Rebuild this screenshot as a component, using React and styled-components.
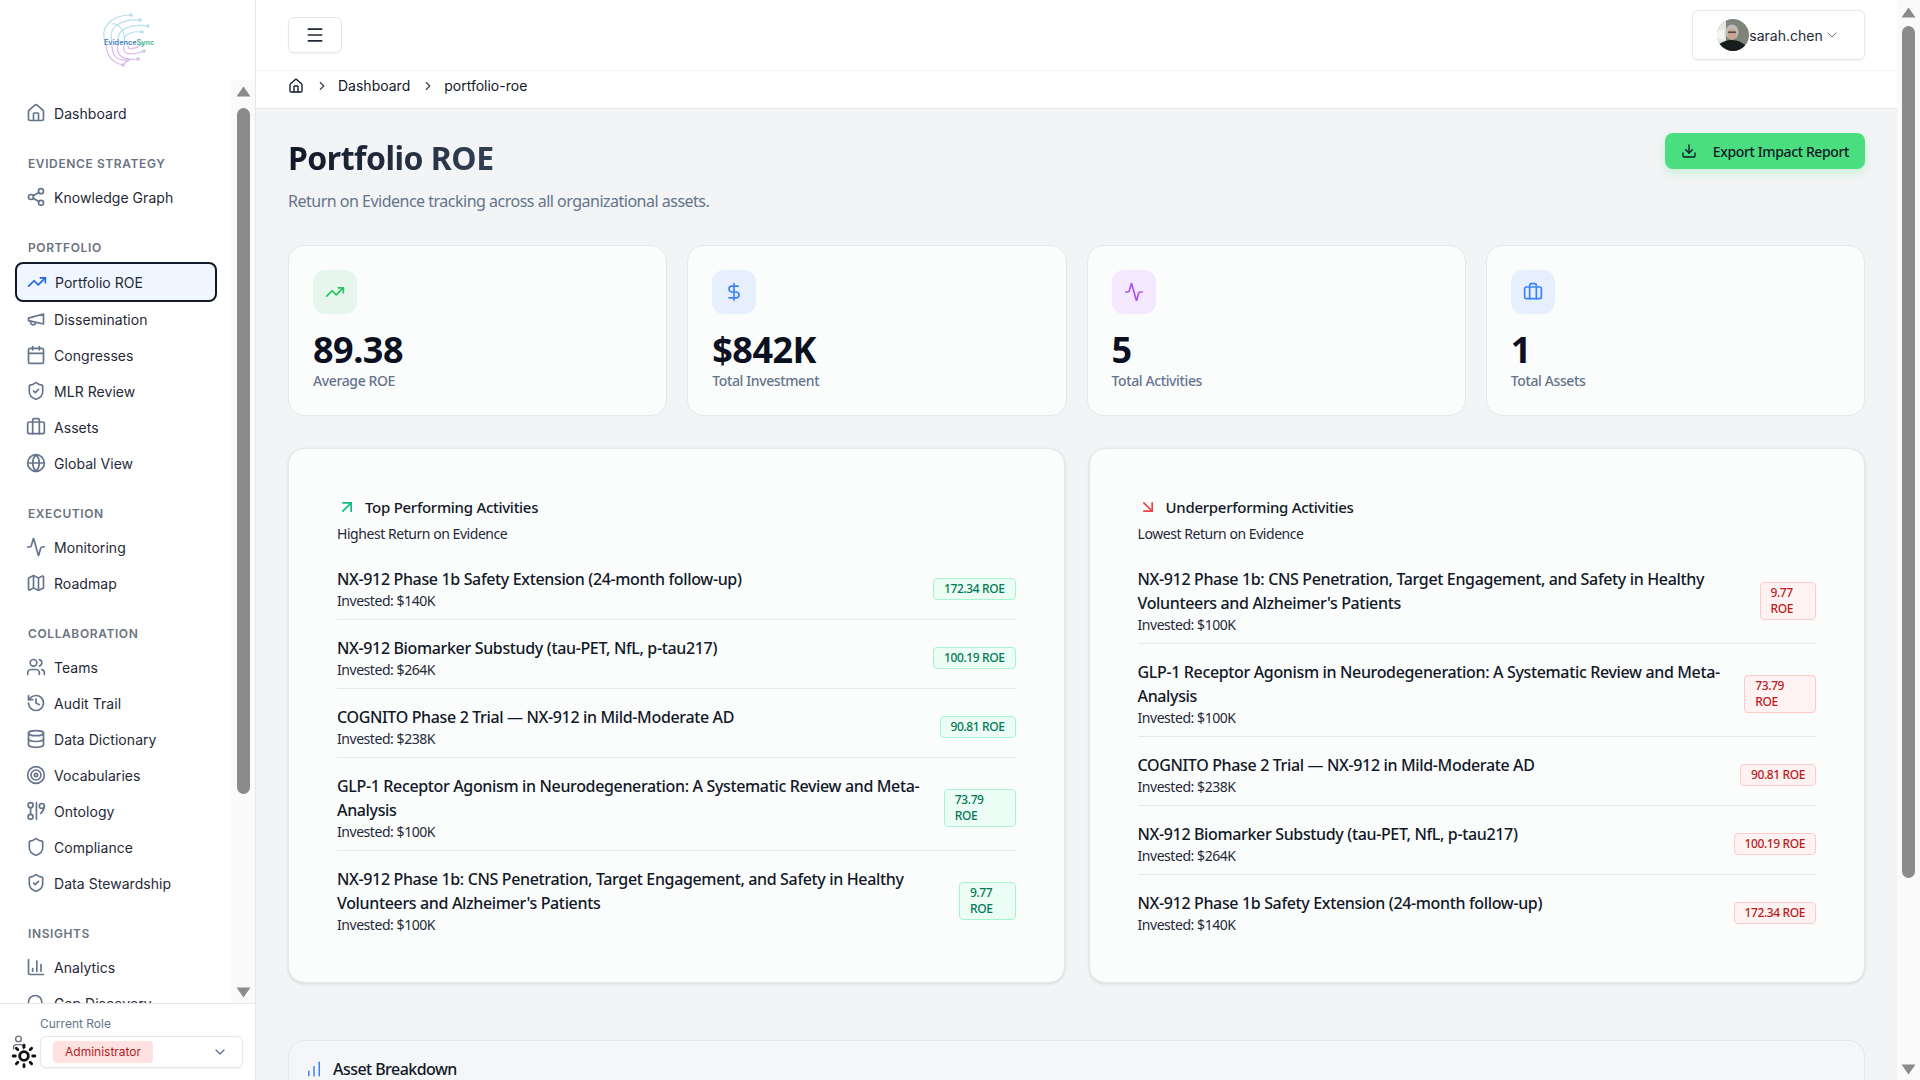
import styled, { createGlobalStyle } from 'styled-components';
import {
  Activity, ArrowDownRight, ArrowUpRight, Briefcase, Calendar, ChartColumn, ChartNoAxesColumnIncreasing, ChevronDown,
  ChevronRight, Database, DollarSign, Download, Globe, History, House, Map as MapIcon, Menu, Search, Shield,
  ShieldCheck, Share2, Sun, Target, TrendingUp, User, Users,
} from 'lucide-react';

const GlobalStyle = createGlobalStyle`
  html, body, #root { height: 100%; margin: 0; }
  body {
    overflow: hidden;
    font-family: Inter, "Liberation Sans", sans-serif;
    background: #f3f4f6;
    color: #1f2937;
  }
  * { box-sizing: border-box; }
`;

const Shell = styled.div`
  display: flex;
  height: 1080px;
  width: 1920px;
`;

const Sidebar = styled.aside`
  position: relative;
  flex: 0 0 256px;
  display: flex;
  flex-direction: column;
  background: #fff;
  border-right: 1px solid #e5e7eb;
`;

const LogoWrap = styled.div`
  flex: 0 0 80px;
  display: flex;
  align-items: center;
  justify-content: center;
  padding-top: 1px;
`;

const Nav = styled.nav`
  flex: 1;
  overflow: hidden;
  padding: 15px 38px 0 15px;
  min-height: 0;
`;

const SectionLabel = styled.div`
  height: 20px;
  line-height: 20px;
  margin: 23px 0 5px;
  padding-left: 13px;
  font-size: 12px;
  font-weight: 600;
  letter-spacing: 0.6px;
  color: #6b7280;
`;

const NavItem = styled.a`
  display: flex;
  align-items: center;
  gap: 8px;
  height: 36px;
  padding-left: 11px;
  font-size: 14px;
  letter-spacing: 0.05px;
  color: #1f2937;
  white-space: nowrap;
  svg { color: #64748b; flex: none; }
`;

const ActiveItem = styled(NavItem)`
  height: 40px;
  margin: -1px 0 -1px;
  background: #eff6ff;
  border: 2px solid #111827;
  border-radius: 8px;
  padding-left: 10px;
  svg { color: #2563eb; }
`;

const Rail = styled.div`
  position: absolute;
  background: #fafafa;
  width: 24px;
  display: flex;
  flex-direction: column;
  align-items: center;
`;

const SideRail = styled(Rail)`
  left: 231px;
  top: 80px;
  height: 923px;
`;

const PageRail = styled(Rail)`
  right: 0;
  top: 0;
  height: 1080px;
  width: 23px;
`;

const Arrow = styled.svg`
  flex: none;
  fill: #8b8b8b;
  margin: ${(p) => p.$margin};
`;

const Thumb = styled.div`
  width: 13px;
  height: ${(p) => p.$height}px;
  margin-top: ${(p) => p.$top}px;
  background: #8b8b8b;
  border-radius: 7px;
`;

const RoleBar = styled.div`
  flex: 0 0 77px;
  display: flex;
  align-items: flex-end;
  gap: 5px;
  padding: 0 12px 12px 12px;
  background: #fff;
  border-top: 1px solid #e5e7eb;
`;

const RoleIcon = styled.div`
  position: relative;
  width: 23px;
  height: 35px;
  flex: none;
  margin-bottom: -1px;
`;

const RoleUser = styled(User)`
  position: absolute;
  left: -2px;
  top: 0;
  color: #6b7280;
`;

const RoleSun = styled(Sun)`
  position: absolute;
  left: -1px;
  bottom: 0;
  color: #111;
`;

const RoleField = styled.div`
  flex: 1;
`;

const RoleLabel = styled.div`
  font-size: 12px;
  line-height: 16px;
  margin-bottom: 4px;
  color: #64748b;
`;

const RoleSelect = styled.div`
  display: flex;
  align-items: center;
  justify-content: space-between;
  height: 32px;
  padding: 0 14px 0 12px;
  border: 1px solid #e2e8f0;
  border-radius: 6px;
  box-shadow: 0 1px 2px rgba(0, 0, 0, 0.05);
  svg { color: #64748b; }
`;

const RoleTag = styled.span`
  padding: 0 12px;
  height: 22px;
  line-height: 22px;
  font-size: 12px;
  color: #b91c1c;
  background: #fee2e2;
  border-radius: 4px;
`;

const Main = styled.main`
  position: relative;
  flex: 1;
  min-width: 0;
  display: flex;
  flex-direction: column;
  padding-right: 23px;
`;

const TopBar = styled.header`
  flex: 0 0 71px;
  display: flex;
  align-items: center;
  justify-content: space-between;
  padding: 0 32px;
  background: #fff;
  border-bottom: 1px solid #f3f4f6;
`;

const MenuButton = styled.button`
  display: flex;
  align-items: center;
  justify-content: center;
  width: 54px;
  height: 36px;
  background: #fff;
  border: 1px solid #e5e7eb;
  border-radius: 6px;
  box-shadow: 0 1px 2px rgba(0, 0, 0, 0.05);
  color: #1f2937;
`;

const UserButton = styled.button`
  display: flex;
  align-items: center;
  justify-content: center;
  width: 173px;
  height: 50px;
  background: #fff;
  border: 1px solid #e5e7eb;
  border-radius: 6px;
  box-shadow: 0 1px 2px rgba(0, 0, 0, 0.05);
  font-family: Inter, sans-serif;
  font-size: 14px;
  color: #1f2937;
  svg.chevron { color: #6b7280; margin-left: 1px; }
`;

const Crumbs = styled.div`
  flex: 0 0 38px;
  display: flex;
  align-items: center;
  padding: 0 32px 8px;
  background: #fff;
  border-bottom: 1px solid #e5e7eb;
  font-size: 14px;
  color: #111827;
`;

const CrumbSep = styled(ChevronRight)`
  margin: 0 9px 0 11px;
  color: #374151;
`;

const Content = styled.div`
  flex: 1;
  overflow: hidden;
  padding: 24px 32px 0;
  font-family: "Noto Sans", "Open Sans", sans-serif;
`;

const PageHead = styled.div`
  display: flex;
  justify-content: space-between;
  align-items: flex-start;
`;

const Title = styled.h1`
  display: inline-block;
  margin: 0;
  font-size: 32px;
  line-height: 50px;
  font-weight: 700;
  letter-spacing: -0.5px;
  background: linear-gradient(90deg, #111827, #334155);
  -webkit-background-clip: text;
  background-clip: text;
  color: transparent;
`;

const Subtitle = styled.p`
  margin: 6px 0 0;
  font-size: 16px;
  line-height: 24px;
  letter-spacing: -0.5px;
  color: #64748b;
`;

const ExportButton = styled.button`
  display: flex;
  align-items: center;
  gap: 16px;
  height: 36px;
  padding: 0 16px;
  border: 0;
  border-radius: 8px;
  background: #4ade80;
  box-shadow: 0 4px 8px rgba(74, 222, 128, 0.25);
  font-family: "Noto Sans", sans-serif;
  font-size: 14px;
  font-weight: 500;
  letter-spacing: -0.38px;
  color: #111827;
`;

const StatGrid = styled.div`
  display: grid;
  grid-template-columns: repeat(4, 1fr);
  gap: 20px;
  margin-top: 32px;
`;

const StatCard = styled.div`
  height: 171px;
  padding: 24px;
  background: #fbfcfc;
  border: 1px solid #e5e7eb;
  border-radius: 16px;
`;

const StatIcon = styled.div`
  display: flex;
  align-items: center;
  justify-content: center;
  width: 44px;
  height: 44px;
  border-radius: 12px;
  background: ${(p) => p.$bg};
  color: ${(p) => p.$fg};
`;

const StatValue = styled.div`
  margin-top: 14px;
  font-size: 36px;
  line-height: 43px;
  font-weight: 700;
  letter-spacing: -0.5px;
  color: #0b1120;
`;

const StatLabel = styled.div`
  font-size: 14px;
  line-height: 20px;
  font-weight: 500;
  letter-spacing: -0.38px;
  color: #64748b;
`;

const PanelGrid = styled.div`
  display: grid;
  grid-template-columns: repeat(2, 1fr);
  gap: 24px;
  margin-top: 32px;
`;

const Panel = styled.section`
  height: 535px;
  padding: 46px 48px 0;
  background: #fbfcfc;
  border: 1px solid #e5e7eb;
  border-radius: 16px;
  box-shadow: 0 1px 3px rgba(0, 0, 0, 0.12);
`;

const PanelTitle = styled.h3`
  display: flex;
  align-items: center;
  gap: 8px;
  margin: 0;
  height: 24px;
  font-size: 15px;
  font-weight: 500;
  letter-spacing: -0.28px;
  color: #111827;
`;

const PanelSub = styled.p`
  margin: 5px 0 0;
  font-size: 14px;
  line-height: 20px;
  letter-spacing: -0.45px;
  color: #1f2937;
`;

const List = styled.ul`
  list-style: none;
  margin: 23px 0 0;
  padding: 0;
`;

const Row = styled.li`
  display: flex;
  align-items: center;
  justify-content: space-between;
  gap: 16px;
  padding-bottom: 8px;
  margin-bottom: 16px;
  border-bottom: 1px solid #e5e7eb;
  &:last-child { border-bottom: 0; margin-bottom: 0; }
`;

const RowName = styled.div`
  font-size: 16px;
  line-height: 24px;
  font-weight: 500;
  letter-spacing: -0.35px;
  color: #111827;
`;

const RowMeta = styled.div`
  font-size: 14px;
  line-height: 20px;
  letter-spacing: -0.45px;
  color: #1f2937;
`;

const RoeBadge = styled.span`
  padding: 2px 10px;
  font-size: 12px;
  line-height: 16px;
  font-weight: 500;
  letter-spacing: -0.4px;
  border-radius: 4px;
  border: 1px solid ${(p) => (p.$bad ? '#fecaca' : '#a7f3d0')};
  background: ${(p) => (p.$bad ? '#fef2f2' : '#ecfdf5')};
  color: ${(p) => (p.$bad ? '#b91c1c' : '#047857')};
`;

const BreakdownCard = styled.section`
  height: 80px;
  margin-top: 57px;
  padding: 16px;
  border: 1px solid #e5e7eb;
  border-radius: 16px 16px 0 0;
  background: #f5f6f7;
`;

const BreakdownTitle = styled.h3`
  display: flex;
  align-items: center;
  gap: 10px;
  margin: 0;
  font-size: 16px;
  line-height: 24px;
  font-weight: 500;
  letter-spacing: -0.55px;
  color: #111827;
  svg { color: #3b82f6; }
`;

const Megaphone = (props) => (
  <svg width="20" height="20" viewBox="0 0 24 24" fill="none" stroke="currentColor" strokeWidth="2" strokeLinecap="round" strokeLinejoin="round" {...props}>
    <path d="m3 11 18-5v12L3 14v-3z" />
    <path d="M11.6 16.8a3 3 0 1 1-5.8-1.6" />
  </svg>
);

const Ontology = (props) => (
  <svg width="20" height="20" viewBox="0 0 24 24" fill="none" stroke="currentColor" strokeWidth="2" strokeLinecap="round" strokeLinejoin="round" {...props}>
    <circle cx="5.5" cy="5" r="3" />
    <circle cx="5.5" cy="19" r="3" />
    <path d="M5.5 8v8" />
    <path d="M12.5 2v20" />
    <circle cx="19" cy="6" r="3" />
    <path d="M21.5 8c0 3-2 5-4 7" />
  </svg>
);

const Logo = () => (
  <svg width="60" height="60" viewBox="0 0 60 60" fill="none" strokeLinecap="round">
    <g stroke="#b9dfef" strokeWidth="1.2">
      <path d="M8 32C1 18 12 4 33 4" />
      <path d="M14 30C10 18 20 8 42 9" />
      <path d="M20 28C20 20 30 12 50 15" />
      <path d="M26 28C28 22 36 20 44 21" />
      <path d="M14 13C22 12 28 22 26 31" />
    </g>
    <g fill="#b9dfef">
      <circle cx="33" cy="4" r="1.8" />
      <circle cx="42" cy="9" r="1.8" />
      <circle cx="50" cy="15" r="1.8" />
      <circle cx="44" cy="21" r="1.8" />
    </g>
    <g stroke="#dcb9ec" strokeWidth="1.2">
      <path d="M8 34C9 46 15 52 25 54" />
      <path d="M14 34C14 44 18 50 30 49" />
      <path d="M20 34C18 42 22 50 40 48" />
      <path d="M26 35C24 42 30 46 46 40" />
      <path d="M30 35C30 38 34 40 44 33" />
      <path d="M25 54L30 49" />
    </g>
    <g fill="#dcb9ec">
      <circle cx="25" cy="54" r="1.8" />
      <circle cx="30" cy="49" r="1.8" />
      <circle cx="40" cy="48" r="1.8" />
    </g>
    <g fill="#b5d4ee">
      <circle cx="46" cy="40" r="1.8" />
      <circle cx="44" cy="33" r="1.8" />
    </g>
    <text x="6" y="33.5" fontFamily="Inter, sans-serif" fontSize="7.2" fontWeight="700" fill="#4f86c6">Evidence<tspan fill="#52c09a">Sync</tspan></text>
  </svg>
);

const Avatar = () => (
  <svg width="32" height="32" viewBox="0 0 32 32">
    <defs>
      <clipPath id="avatar-clip"><circle cx="16" cy="16" r="16" /></clipPath>
    </defs>
    <g clipPath="url(#avatar-clip)">
      <rect width="32" height="32" fill="#7f8478" />
      <rect width="9" height="32" fill="#e3e6e1" />
      <rect x="0" y="11" width="7" height="9" fill="#f5f6f2" />
      <ellipse cx="15" cy="13" rx="6.5" ry="7.5" fill="#bdbcb8" />
      <ellipse cx="15" cy="15" rx="4.5" ry="5.5" fill="#c9a494" />
      <rect x="11" y="12.5" width="8" height="1.4" fill="#4a3a34" />
      <path d="M0 32V27C5 22 11 21 15 21C21 21 27 24 32 30V32Z" fill="#171c1c" />
    </g>
  </svg>
);

const sections = [
  { label: 'EVIDENCE STRATEGY', items: [{ name: 'Knowledge Graph', icon: Share2 }] },
  {
    label: 'PORTFOLIO',
    items: [
      { name: 'Portfolio ROE', icon: TrendingUp, active: true },
      { name: 'Dissemination', icon: Megaphone },
      { name: 'Congresses', icon: Calendar },
      { name: 'MLR Review', icon: ShieldCheck },
      { name: 'Assets', icon: Briefcase },
      { name: 'Global View', icon: Globe },
    ],
  },
  {
    label: 'EXECUTION',
    items: [
      { name: 'Monitoring', icon: Activity },
      { name: 'Roadmap', icon: MapIcon },
    ],
  },
  {
    label: 'COLLABORATION',
    items: [
      { name: 'Teams', icon: Users },
      { name: 'Audit Trail', icon: History },
      { name: 'Data Dictionary', icon: Database },
      { name: 'Vocabularies', icon: Target },
      { name: 'Ontology', icon: Ontology },
      { name: 'Compliance', icon: Shield },
      { name: 'Data Stewardship', icon: ShieldCheck },
    ],
  },
  {
    label: 'INSIGHTS',
    items: [
      { name: 'Analytics', icon: ChartColumn },
      { name: 'Gap Discovery', icon: Search },
    ],
  },
];

const stats = [
  { value: '89.38', label: 'Average ROE', icon: TrendingUp, bg: '#e6f6ec', fg: '#22c55e' },
  { value: '$842K', label: 'Total Investment', icon: DollarSign, bg: '#e8effc', fg: '#3b82f6' },
  { value: '5', label: 'Total Activities', icon: Activity, bg: '#f3e8fd', fg: '#a855f7' },
  { value: '1', label: 'Total Assets', icon: Briefcase, bg: '#e8effc', fg: '#3b82f6' },
];

const topActivities = [
  { name: 'NX-912 Phase 1b Safety Extension (24-month follow-up)', invested: '$140K', roe: '172.34' },
  { name: 'NX-912 Biomarker Substudy (tau-PET, NfL, p-tau217)', invested: '$264K', roe: '100.19' },
  { name: 'COGNITO Phase 2 Trial — NX-912 in Mild-Moderate AD', invested: '$238K', roe: '90.81' },
  { name: 'GLP-1 Receptor Agonism in Neurodegeneration: A Systematic Review and Meta-Analysis', invested: '$100K', roe: '73.79' },
  { name: "NX-912 Phase 1b: CNS Penetration, Target Engagement, and Safety in Healthy Volunteers and Alzheimer's Patients", invested: '$100K', roe: '9.77' },
];

function ActivityList({ rows, bad }) {
  return (
    <List>
      {rows.map((row) => (
        <Row key={row.name}>
          <div>
            <RowName>{row.name}</RowName>
            <RowMeta>Invested: {row.invested}</RowMeta>
          </div>
          <RoeBadge $bad={bad}>{row.roe} ROE</RoeBadge>
        </Row>
      ))}
    </List>
  );
}

function UpArrow({ margin }) {
  return (
    <Arrow $margin={margin} width="15" height="11" viewBox="0 0 15 11">
      <path d="M7.5 0.5 14.5 10.5H0.5Z" />
    </Arrow>
  );
}

function DownArrow({ margin }) {
  return (
    <Arrow $margin={margin} width="15" height="11" viewBox="0 0 15 11">
      <path d="M7.5 10.5 14.5 0.5H0.5Z" />
    </Arrow>
  );
}

export default function App() {
  return (
    <Shell>
      <GlobalStyle />
      <Sidebar>
        <LogoWrap>
          <Logo />
        </LogoWrap>
        <Nav>
          <NavItem><House size={20} />Dashboard</NavItem>
          {sections.map((section) => (
            <div key={section.label}>
              <SectionLabel>{section.label}</SectionLabel>
              {section.items.map(({ name, icon: Icon, active }) => {
                const Item = active ? ActiveItem : NavItem;
                return <Item key={name}><Icon size={20} />{name}</Item>;
              })}
            </div>
          ))}
        </Nav>
        <RoleBar>
          <RoleIcon>
            <RoleUser size={17} />
            <RoleSun size={26} strokeWidth={2.6} />
          </RoleIcon>
          <RoleField>
            <RoleLabel>Current Role</RoleLabel>
            <RoleSelect>
              <RoleTag>Administrator</RoleTag>
              <ChevronDown size={16} />
            </RoleSelect>
          </RoleField>
        </RoleBar>
        <SideRail>
          <UpArrow margin="6px 0 0" />
          <Thumb $top={11} $height={686} />
          <DownArrow margin="auto 0 5px" />
        </SideRail>
      </Sidebar>
      <Main>
        <TopBar>
          <MenuButton><Menu size={20} /></MenuButton>
          <UserButton>
            <Avatar />
            sarah.chen
            <ChevronDown className="chevron" size={16} strokeWidth={1.5} />
          </UserButton>
        </TopBar>
        <Crumbs>
          <House size={16} />
          <CrumbSep size={14} />
          Dashboard
          <CrumbSep size={14} />
          portfolio-roe
        </Crumbs>
        <Content>
          <PageHead>
            <div>
              <Title>Portfolio ROE</Title>
              <Subtitle>Return on Evidence tracking across all organizational assets.</Subtitle>
            </div>
            <ExportButton><Download size={16} />Export Impact Report</ExportButton>
          </PageHead>
          <StatGrid>
            {stats.map(({ value, label, icon: Icon, bg, fg }) => (
              <StatCard key={label}>
                <StatIcon $bg={bg} $fg={fg}><Icon size={20} /></StatIcon>
                <StatValue>{value}</StatValue>
                <StatLabel>{label}</StatLabel>
              </StatCard>
            ))}
          </StatGrid>
          <PanelGrid>
            <Panel>
              <PanelTitle>
                <ArrowUpRight size={20} color="#10b981" />
                Top Performing Activities
              </PanelTitle>
              <PanelSub>Highest Return on Evidence</PanelSub>
              <ActivityList rows={topActivities} />
            </Panel>
            <Panel>
              <PanelTitle>
                <ArrowDownRight size={20} color="#ef4444" />
                Underperforming Activities
              </PanelTitle>
              <PanelSub>Lowest Return on Evidence</PanelSub>
              <ActivityList rows={[...topActivities].reverse()} bad />
            </Panel>
          </PanelGrid>
          <BreakdownCard>
            <BreakdownTitle><ChartNoAxesColumnIncreasing size={18} />Asset Breakdown</BreakdownTitle>
          </BreakdownCard>
        </Content>
      </Main>
      <PageRail>
        <UpArrow margin="7px 0 0" />
        <Thumb $top={8} $height={852} />
        <DownArrow margin="auto 0 5px" />
      </PageRail>
    </Shell>
  );
}
